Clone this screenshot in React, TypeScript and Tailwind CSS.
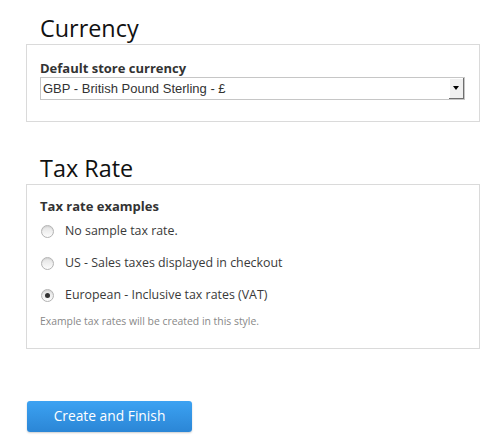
const Radio = ({ checked }: { checked?: boolean }) => (
  <span className="ml-[1px] flex h-[13px] w-[13px] shrink-0 items-center justify-center rounded-full border border-[#b3b3b3] bg-gradient-to-b from-[#e2e2e2] to-[#fdfdfd] shadow-[inset_0_1px_1px_rgba(0,0,0,0.08)]">
    {checked && <span className="h-[5px] w-[5px] rounded-full bg-[#333]" />}
  </span>
);

const options = [
  { label: "No sample tax rate.", checked: false },
  { label: "US - Sales taxes displayed in checkout", checked: false },
  { label: "European - Inclusive tax rates (VAT)", checked: true },
];

export default function App() {
  return (
    <div className="h-[446px] w-[500px] bg-white pl-[26px] pr-[20px] font-['Open_Sans',sans-serif]">
      {/* Currency */}
      <h2 className="pl-[14px] pt-[12px] text-[23.4px] leading-[32px] text-[#111]">Currency</h2>
      <div className="border border-[#dadada] pb-[21px] pl-[13px] pr-[14px] pt-[14px]">
        <p className="text-[13px] font-bold leading-[18px] text-[#333]">Default store currency</p>
        <div className="flex h-[23px] items-center border border-[#c6c6c6] pl-[2px] font-['Liberation_Sans',Arial,sans-serif] text-[13px] text-[#333]">
          <span className="flex-1">GBP - British Pound Sterling - £</span>
          <span className="flex h-[21px] w-[15px] items-center justify-center border-b border-r border-b-[#6f6f6f] border-r-[#6f6f6f] bg-[#f0f0f0] shadow-[inset_1px_1px_0_#fff]">
            <span className="h-0 w-0 border-x-[3.5px] border-t-[4px] border-x-transparent border-t-black" />
          </span>
        </div>
      </div>

      {/* Tax Rate */}
      <h2 className="mt-[30px] pl-[14px] text-[23.4px] leading-[32px] text-[#111]">Tax Rate</h2>
      <div className="border border-[#dadada] pb-[19px] pl-[13px] pr-[14px] pt-[13px]">
        <p className="text-[13px] font-bold leading-[17px] text-[#333]">Tax rate examples</p>
        {options.map((o) => (
          <label key={o.label} className="flex h-[32px] items-center gap-[11px] text-[12.4px] text-[#3a3a3a]">
            <Radio checked={o.checked} />
            {o.label}
          </label>
        ))}
        <p className="mt-[2px] text-[10.4px] leading-[16px] text-[#888]">Example tax rates will be created in this style.</p>
      </div>

      <button className="ml-[1px] mt-[52px] h-[31px] w-[165px] rounded-[3px] bg-gradient-to-b from-[#3ca2f2] to-[#2b86d6] text-[13.8px] text-white shadow-[0_1px_2px_rgba(0,0,0,0.2)]">
        Create and Finish
      </button>
    </div>
  );
}
